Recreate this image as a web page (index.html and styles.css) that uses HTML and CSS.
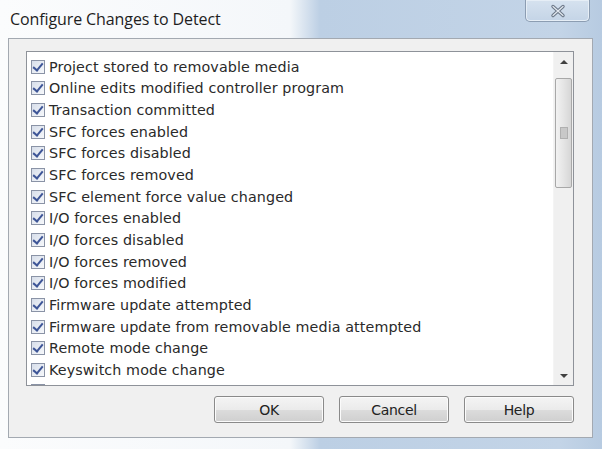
FILE: index.html
```html
<!DOCTYPE html>
<html>
<head>
<meta charset="utf-8">
<link rel="stylesheet" href="styles.css">
</head>
<body>
<div class="window">
  <div class="titlebar">
    <div class="title">Configure Changes to Detect</div>
    <div class="close"><svg width="16" height="14" viewBox="0 0 16 14"><path d="M3 2.5 L13 11.5 M13 2.5 L3 11.5" stroke="#6a7686" stroke-width="3.4" stroke-linecap="round"/><path d="M3 2.5 L13 11.5 M13 2.5 L3 11.5" stroke="#e4eaf1" stroke-width="1.2" stroke-linecap="round"/></svg></div>
  </div>
  <div class="panel">
    <div class="listbox">
      <div class="items">
        <div class="row"><span class="cb"></span>Project stored to removable media</div>
        <div class="row"><span class="cb"></span>Online edits modified controller program</div>
        <div class="row"><span class="cb"></span>Transaction committed</div>
        <div class="row"><span class="cb"></span>SFC forces enabled</div>
        <div class="row"><span class="cb"></span>SFC forces disabled</div>
        <div class="row"><span class="cb"></span>SFC forces removed</div>
        <div class="row"><span class="cb"></span>SFC element force value changed</div>
        <div class="row"><span class="cb"></span>I/O forces enabled</div>
        <div class="row"><span class="cb"></span>I/O forces disabled</div>
        <div class="row"><span class="cb"></span>I/O forces removed</div>
        <div class="row"><span class="cb"></span>I/O forces modified</div>
        <div class="row"><span class="cb"></span>Firmware update attempted</div>
        <div class="row"><span class="cb"></span>Firmware update from removable media attempted</div>
        <div class="row"><span class="cb"></span>Remote mode change</div>
        <div class="row"><span class="cb"></span>Keyswitch mode change</div>
        <div class="row"><span class="cb"></span></div>
      </div>
      <div class="scrollbar">
        <div class="arrow up"></div>
        <div class="track">
          <div class="thumb"><div class="grip"></div></div>
        </div>
        <div class="arrow down"></div>
      </div>
    </div>
    <div class="buttons">
      <div class="btn">OK</div>
      <div class="btn">Cancel</div>
      <div class="btn">Help</div>
    </div>
  </div>
</div>
</body>
</html>
```
FILE: styles.css
```css
html, body {
  margin: 0;
  padding: 0;
}
body {
  width: 602px;
  height: 449px;
  overflow: hidden;
}
.window {
  width: 602px;
  height: 449px;
  background: linear-gradient(to right, #fbfcfd 0, #f4f7fa 290px, #bccfe4 320px, #c3d4e7 560px, #b7cbe1 602px);
  display: flex;
  flex-direction: column;
  box-sizing: border-box;
}
.titlebar {
  height: 38px;
  display: flex;
  justify-content: space-between;
  align-items: flex-start;
  flex: none;
}
.title {
  font-family: "Open Sans", "Noto Sans", sans-serif;
  font-size: 16px;
  color: #1e1e1e;
  margin: 8px 0 0 10px;
  letter-spacing: -0.1px;
}
.close {
  width: 63px;
  height: 21px;
  margin-right: 12px;
  border: 1px solid #8c9db2;
  border-top: none;
  border-radius: 0 0 5px 5px;
  background: linear-gradient(#d6e2ef, #c4d4e6);
  box-shadow: inset 0 0 0 1px #e6eef6;
  display: flex;
  align-items: center;
  justify-content: center;
}
.panel {
  margin: 0 9px 0 8px;
  height: 400px;
  box-sizing: border-box;
  border: 1px solid #a3a9b1;
  background: #f0f0f0;
  padding: 12px 18px 0 17px;
  display: flex;
  flex-direction: column;
}
.listbox {
  height: 335px;
  border: 1px solid #8e9299;
  background: #fff;
  box-sizing: border-box;
  display: flex;
  overflow: hidden;
}
.items {
  flex: 1;
  padding: 4px 0 0 4px;
  overflow: hidden;
}
.row {
  height: 21.65px;
  display: flex;
  align-items: center;
  font-family: "DejaVu Sans", Verdana, sans-serif;
  font-size: 14.3px;
  color: #2a2a2a;
  white-space: nowrap;
  letter-spacing: 0.1px;
}
.cb {
  width: 12px;
  height: 12px;
  border: 1px solid #8a93a6;
  background: linear-gradient(135deg, #d7deea, #f6f8fb);
  margin-right: 4px;
  position: relative;
  flex: none;
}
.cb::after {
  content: "";
  position: absolute;
  left: 3px;
  top: 0px;
  width: 4px;
  height: 8px;
  border-right: 2px solid #3d5597;
  border-bottom: 2px solid #3d5597;
  transform: rotate(40deg);
}
.scrollbar {
  width: 19px;
  flex: none;
  background: #f0f0f0;
  display: flex;
  flex-direction: column;
  border-left: 1px solid #f4f4f4;
}
.arrow {
  height: 20px;
  flex: none;
  position: relative;
}
.arrow::after {
  content: "";
  position: absolute;
  left: 6px;
  width: 0;
  height: 0;
  border-left: 4px solid transparent;
  border-right: 4px solid transparent;
}
.arrow.up::after {
  top: 8px;
  border-bottom: 4px solid #404040;
}
.arrow.down::after {
  top: 9px;
  border-top: 4px solid #404040;
}
.track {
  flex: 1;
  padding-top: 6px;
}
.thumb {
  height: 108px;
  margin: 0 1px;
  border: 1px solid #a8a8a8;
  border-radius: 2px;
  background: linear-gradient(to right, #f2f2f2, #e2e2e2 60%, #d6d6d6);
  display: flex;
  align-items: center;
  justify-content: center;
}
.grip {
  width: 6px;
  height: 10px;
  background: #c8c8c8;
  border: 1px solid #b0b0b0;
}
.buttons {
  display: flex;
  justify-content: flex-end;
  gap: 15px;
  margin-top: 10px;
}
.btn {
  width: 108px;
  height: 25px;
  border: 1px solid #8a8a8a;
  border-radius: 3px;
  background: linear-gradient(#f4f4f4, #ebebeb 50%, #dcdcdc 51%, #cfcfcf);
  box-shadow: inset 0 0 0 1px #fbfbfb;
  display: flex;
  align-items: center;
  justify-content: center;
  font-family: "DejaVu Sans", Verdana, sans-serif;
  font-size: 14px;
  letter-spacing: -0.3px;
  color: #222;
}
```
